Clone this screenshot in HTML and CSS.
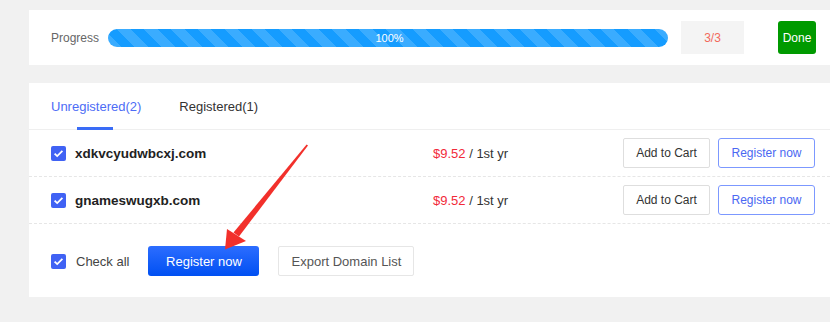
FILE: index.html
```html
<!DOCTYPE html>
<html lang="en">
<head>
<meta charset="UTF-8" />
<title>Domain Registration</title>
<link rel="stylesheet" href="styles.css">
</head>
<body>
<div class="page">

  <!-- ---------- PROGRESS ---------- -->
  <div class="panel progress-panel">
    <span class="progress-label">Progress</span>
    <div class="bar"><span class="bar-text">100%</span></div>
    <div class="count">3/3</div>
    <button class="btn-done">Done</button>
  </div>

  <!-- ---------- RESULTS ---------- -->
  <div class="panel result-panel">
    <div class="tabs">
      <div class="tab active">Unregistered(2)</div>
      <div class="tab">Registered(1)</div>
    </div>

    <div class="row">
      <span class="check"><svg viewBox="0 0 15 15"><path d="M3.6 7.6l2.6 2.5 5.2-5.2" fill="none" stroke="#fff" stroke-width="1.8"/></svg></span>
      <span class="domain">xdkvcyudwbcxj.com</span>
      <span class="price"><em>$9.52</em> / 1st yr</span>
      <div class="actions">
        <button class="btn">Add to Cart</button>
        <button class="btn btn-outline">Register now</button>
      </div>
    </div>
    <div class="row">
      <span class="check"><svg viewBox="0 0 15 15"><path d="M3.6 7.6l2.6 2.5 5.2-5.2" fill="none" stroke="#fff" stroke-width="1.8"/></svg></span>
      <span class="domain">gnameswugxb.com</span>
      <span class="price"><em>$9.52</em> / 1st yr</span>
      <div class="actions">
        <button class="btn">Add to Cart</button>
        <button class="btn btn-outline">Register now</button>
      </div>
    </div>

    <div class="footer">
      <span class="check"><svg viewBox="0 0 15 15"><path d="M3.6 7.6l2.6 2.5 5.2-5.2" fill="none" stroke="#fff" stroke-width="1.8"/></svg></span>
      <span class="check-all">Check all</span>
      <button class="btn btn-primary">Register now</button>
      <button class="btn btn-export">Export Domain List</button>
    </div>
  </div>

  <!-- annotation arrow -->
  <svg class="arrow" viewBox="0 0 830 322">
    <polygon points="306.6,144.4 308,145.6 239,236.5 233.5,232.5" fill="#f2302b"/>
    <polygon points="225,249.5 227,229 246,241" fill="#f2302b"/>
  </svg>
</div>
</body>
</html>
```

FILE: styles.css
```css
/* ---- base ---- */
body{margin:0;background:#f1f1f1;font-family:"Liberation Sans",Arial,sans-serif;color:#333}
.page{position:relative;width:830px;height:322px;padding:10px 0 0 29px;box-sizing:border-box}
.panel{background:#fff}
button{font-family:inherit;cursor:pointer}

/* ---- progress ---- */
.progress-panel{display:flex;align-items:center;height:55px;padding-left:22px;margin-bottom:18px}
.progress-label{font-size:12px;color:#666;width:57px}
.bar{width:560px;height:18px;border-radius:9px;display:flex;align-items:center;justify-content:center;
  background:repeating-linear-gradient(45deg,#3aacff 0 9.5px,#159cff 9.5px 19px)}
.bar-text{color:#fff;font-size:11px;padding-left:3px}
.count{width:63px;height:33px;margin-left:13px;background:#f4f4f4;color:#f26a5c;font-size:12px;
  display:flex;align-items:center;justify-content:center}
.btn-done{margin-left:34px;width:38px;height:33px;border:none;border-radius:3px;background:#009a00;color:#fff;font-size:12px;padding:0}

/* ---- tabs ---- */
.result-panel{height:214px}
.tabs{display:flex;height:46px;padding-left:22px;border-bottom:1px solid #efefef}
.tab{position:relative;font-size:13px;color:#333;line-height:47px;margin-right:38px}
.tab.active{color:#4d6cf6}
.tab.active:after{content:"";position:absolute;left:26px;bottom:-1px;width:36px;height:3px;background:#3a6cf6}

/* ---- rows ---- */
.row{display:flex;align-items:center;height:46px;padding:0 15px 0 22px;border-bottom:1px dashed #e6e6e6}
.check{width:15px;height:15px;border-radius:2px;background:#4062f4;display:inline-block;margin-right:9px;flex:none}
.check svg{display:block;width:15px;height:15px}
.domain{width:358px;font-size:13.5px;font-weight:bold;color:#222}
.price{flex:1;font-size:13px;color:#333}
.price em{font-style:normal;color:#f22a3a}
.actions{display:flex;gap:8px}
.btn{height:30px;border:1px solid #dedede;border-radius:2px;background:#fff;color:#333;font-size:12px;padding:0}
.actions .btn{width:87px}
.actions .btn-outline{width:97px;border-color:#7c98ff;border-radius:3px;color:#4a68f2}

/* ---- footer ---- */
.footer{display:flex;align-items:center;height:74px;padding-left:22px}
.footer .check{margin-right:10px}
.check-all{font-size:13px;color:#444;margin-right:19px}
.btn-primary{width:111px;border:none;border-radius:3px;color:#fff;font-size:13px;
  background:linear-gradient(#2c6dff,#0050f2);margin-right:19px}
.btn-export{width:136px;border-color:#e6e6e6;color:#555;font-size:13px}

/* ---- annotation ---- */
.arrow{position:absolute;left:0;top:0;width:830px;height:322px;pointer-events:none}
```
